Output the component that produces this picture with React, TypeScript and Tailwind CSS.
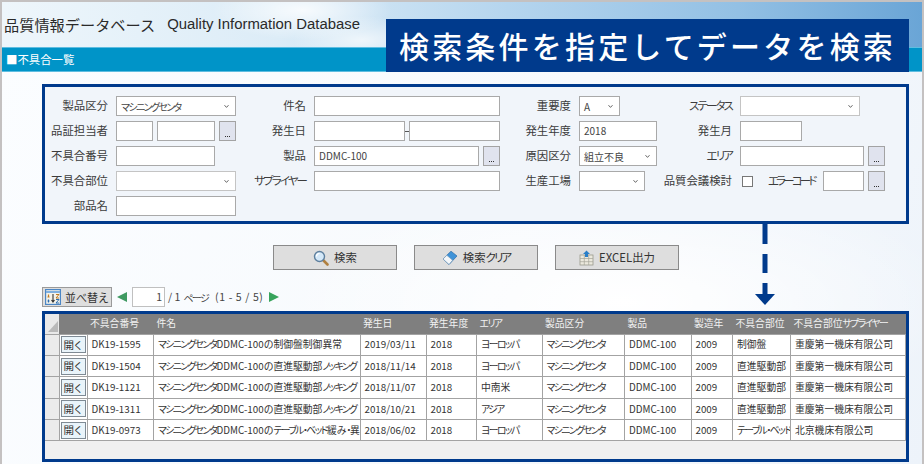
import React from 'react';

const FONT = "[font-family:'Noto_Sans_CJK_JP','Noto_Sans',sans-serif]";

// katakana in the original UI font is narrow, so squeeze only those runs
function Jp({ text, tight }: { text: string; tight?: boolean }) {
  const parts = text.split(/([ァ-ヶー・]+)/);
  return (
    <>
      {parts.map((p, i) =>
        i % 2 === 1 ? (
          <span key={i} className={`${tight ? 'tracking-[-0.24em]' : 'tracking-[-0.16em]'} [font-feature-settings:'palt']`}>{p}</span>
        ) : (
          <span key={i}>{p}</span>
        )
      )}
    </>
  );
}

function Label({ text }: { text: string }) {
  return (
    <div className="flex items-center justify-end whitespace-nowrap text-[11.4px] text-[#3c3c3c]">
      <Jp text={text} />
    </div>
  );
}

function Input({ w, value }: { w: string; value?: string }) {
  return (
    <div className={`${w} h-5 shrink-0 border border-[#a9a9a9] bg-white pl-1 text-[10px] leading-[18px] text-[#444]`}>
      {value}
    </div>
  );
}

function Select({ w, value, light }: { w: string; value?: string; light?: boolean }) {
  return (
    <div className={`${w} h-5 shrink-0 flex items-center justify-between border ${light ? 'border-[#c4c4c4]' : 'border-[#a9a9a9]'} bg-white pl-1 pr-[5px] text-[10px] text-[#444]`}>
      <span className="whitespace-nowrap"><Jp text={value || ''} /></span>
      <svg width="7" height="5" viewBox="0 0 7 5" className="shrink-0">
        <path d="M1.5 1.2 L3.5 3.4 L5.5 1.2" fill="none" stroke="#666" strokeWidth="1" />
      </svg>
    </div>
  );
}

function Dots() {
  return (
    <div className="w-[17px] h-5 shrink-0 flex items-end justify-center border border-[#a3a3a3] bg-[#e0e3ee] pb-[3px]">
      <span className="flex gap-px">
        <i className="block w-px h-px bg-[#333]" />
        <i className="block w-px h-px bg-[#333]" />
        <i className="block w-px h-px bg-[#333]" />
      </span>
    </div>
  );
}

function Action({ icon, label }: { icon: React.ReactNode; label: string }) {
  return (
    <div className="w-[124px] h-[25px] flex items-center justify-center gap-[5px] border border-[#8a8a8a] bg-[#dedede] text-[11.4px] text-[#333]">
      {icon}
      <span><Jp text={label} /></span>
    </div>
  );
}

const SearchIcon = (
  <svg width="16" height="16" viewBox="0 0 16 16">
    <path d="M9.5 9.5 L14.5 14.5" stroke="#b08040" strokeWidth="2.6" strokeLinecap="round" />
    <circle cx="6.5" cy="6.5" r="5" fill="#d4e8f8" stroke="#5d7f9e" strokeWidth="1.4" />
    <path d="M3.5 6.5 A3 3 0 0 1 6.5 3.5" fill="none" stroke="#fff" strokeWidth="1.2" />
  </svg>
);

const EraserIcon = (
  <svg width="16" height="16" viewBox="0 0 16 16">
    <path d="M1 9 L9 1.2 L15 6 L7 14.5 Z" fill="#3f93d8" stroke="#2b6ca8" strokeWidth=".7" />
    <path d="M1 9 L4.8 5.3 L10.6 10.2 L7 14.5 Z" fill="#f4f7fa" stroke="#7c9cb8" strokeWidth=".7" />
  </svg>
);

const ExcelIcon = (
  <svg width="15" height="16" viewBox="0 0 15 16">
    <rect x="1" y="5" width="13" height="10" fill="#ece9de" stroke="#9a9a8c" strokeWidth=".8" />
    <path d="M1 8.5 H14 M1 11.7 H14 M5.3 5 V15 M9.7 5 V15" stroke="#a5a598" strokeWidth=".7" />
    <path d="M7.5 0.5 L11 4 H9 V7 H6 V4 H4 Z" fill="#2a7fc8" />
  </svg>
);

const SortIcon = (
  <svg width="16" height="16" viewBox="0 0 16 16">
    <rect x=".6" y=".6" width="14.8" height="14.8" fill="#f5f3ea" stroke="#4b86c5" strokeWidth="1.2" />
    <path d="M1 3 H15" stroke="#7fb0e0" strokeWidth="2" />
    <path d="M3.5 5.5 V8.5 M2.5 8 H4.5" stroke="#c07a20" strokeWidth="1.2" />
    <path d="M3.5 10.5 V13.5 M2.5 12 H4.5" stroke="#2a6db0" strokeWidth="1.2" />
    <path d="M8 5 V13 M6.5 11 L8 13 L9.5 11" fill="none" stroke="#333" strokeWidth="1.1" />
    <path d="M11 5.5 H14 L11 9 H14" fill="none" stroke="#c07a20" strokeWidth="1" />
    <path d="M11 10.5 H14 L11 14 H14" fill="none" stroke="#2a6db0" strokeWidth="1" />
  </svg>
);

const ROWS = [
  ['DK19-1595', 'マシニングセンタDDMC-100の制御盤制御異常', '2019/03/11', '2018', 'ヨーロッパ', 'マシニングセンタ', 'DDMC-100', '2009', '制御盤', '重慶第一機床有限公司'],
  ['DK19-1504', 'マシニングセンタDDMC-100の直進駆動部ノッキング', '2018/11/14', '2018', 'ヨーロッパ', 'マシニングセンタ', 'DDMC-100', '2009', '直進駆動部', '重慶第一機床有限公司'],
  ['DK19-1121', 'マシニングセンタDDMC-100の直進駆動部ノッキング', '2018/11/07', '2018', '中南米', 'マシニングセンタ', 'DDMC-100', '2009', '直進駆動部', '重慶第一機床有限公司'],
  ['DK19-1311', 'マシニングセンタDDMC-100の直進駆動部ノッキング', '2018/10/21', '2018', 'アジア', 'マシニングセンタ', 'DDMC-100', '2009', '直進駆動部', '重慶第一機床有限公司'],
  ['DK19-0973', 'マシニングセンタDDMC-100のテーブル・ベッド緩み・異音', '2018/06/02', '2018', 'ヨーロッパ', 'マシニングセンタ', 'DDMC-100', '2009', 'テーブル・ベッド', '北京機床有限公司'],
];

const HEADERS = ['不具合番号', '件名', '発生日', '発生年度', 'エリア', '製品区分', '製品', '製造年', '不具合部位', '不具合部位サプライヤー'];
const WIDTHS = [14, 28, 66.5, 206.5, 66, 50.5, 65.5, 82.5, 66.5, 41.5, 58, 115.2];

export default function App() {
  return (
    <div className={`${FONT} relative w-[924px] h-[464px] overflow-hidden border-x-2 border-t-2 border-[#c4c1c1] bg-[radial-gradient(ellipse_340px_120px_at_620px_300px,#ffffff,transparent),linear-gradient(115deg,#fbfdff_0%,#f7fafd_55%,#edf3fa_100%)]`}>
      {/* Header */}
      <header className="h-[45px] flex items-center pl-[2px] bg-[radial-gradient(ellipse_90px_30px_at_300px_8px,#ffffffcc,transparent),radial-gradient(ellipse_70px_24px_at_360px_38px,#ffffffaa,transparent),linear-gradient(90deg,#eef6fb_0%,#dcecf7_30%,#b5d5ee_55%,#93c0e4_80%,#6aa5d6_100%)]">
        <span className="text-[15.2px] text-[#2a2a2a] whitespace-nowrap">品質情報データベース</span>
        <span className="ml-[12px] text-[14.9px] text-[#2a2a2a] whitespace-nowrap [font-family:'Liberation_Sans',sans-serif]">Quality Information Database</span>
      </header>
      <div className="h-[25px] flex items-center pl-1 bg-[#0094c8] border-y border-[#5fbde0] text-[11.4px] text-white">■不具合一覧</div>

      {/* Search panel */}
      <section className="mt-[12px] ml-[40px] w-[867px] h-[140px] border-[3px] border-[#003a8c] bg-[#f1f5fa] pt-[9px]">
        <div className="grid grid-cols-[63px_120px_62px_186px_63px_78px_67px_145px] grid-rows-[20px_20px_20px_20px_20px] gap-x-2 gap-y-[5px]">
          <Label text="製品区分" />
          <Select w="w-full" value="マシニングセンタ" />
          <Label text="件名" />
          <Input w="w-full" />
          <Label text="重要度" />
          <Select w="w-[41px]" value="A" />
          <Label text="ステータス" />
          <Select w="w-[120px]" light />

          <Label text="品証担当者" />
          <div className="flex gap-1">
            <Input w="w-[37px]" />
            <Input w="w-[58px]" />
            <Dots />
          </div>
          <Label text="発生日" />
          <div className="flex items-center gap-0">
            <Input w="w-[91px]" />
            <span className="w-1 h-px bg-[#555]" />
            <Input w="w-[91px]" />
          </div>
          <Label text="発生年度" />
          <Input w="w-full" value="2018" />
          <Label text="発生月" />
          <Input w="w-[62px]" />

          <Label text="不具合番号" />
          <Input w="w-[99px]" />
          <Label text="製品" />
          <div className="flex gap-1">
            <Input w="w-[165px]" value="DDMC-100" />
            <Dots />
          </div>
          <Label text="原因区分" />
          <Select w="w-full" value="組立不良" />
          <Label text="エリア" />
          <div className="flex gap-1">
            <Input w="w-[124px]" />
            <Dots />
          </div>

          <Label text="不具合部位" />
          <Select w="w-full" light />
          <Label text="サプライヤー" />
          <Input w="w-full" />
          <Label text="生産工場" />
          <Select w="w-[66px]" />
          <Label text="品質会議検討" />
          <div className="flex items-center">
            <div className="ml-[2px] w-[11px] h-[11px] border border-[#777] bg-white" />
            <span className="ml-[15px] w-[47px] whitespace-nowrap text-[11.4px] text-[#3c3c3c]"><Jp text="エラーコード" tight /></span>
            <div className="ml-2 flex gap-1">
              <Input w="w-[41px]" />
              <Dots />
            </div>
          </div>

          <Label text="部品名" />
          <Input w="w-full" />
        </div>
      </section>

      {/* Actions */}
      <div className="mt-[21px] ml-[271px] flex gap-[17px]">
        <Action icon={SearchIcon} label="検索" />
        <Action icon={EraserIcon} label="検索クリア" />
        <Action icon={ExcelIcon} label="EXCEL出力" />
      </div>

      {/* Pager */}
      <div className="mt-[17px] ml-[40px] h-5 flex items-center text-[10.5px] text-[#444]">
        <div className="w-[70px] h-5 flex items-center justify-center gap-[4px] border border-[#9a9a9a] bg-[#dedede] text-[11px] text-[#333]">
          {SortIcon}
          <span><Jp text="並べ替え" /></span>
        </div>
        <svg width="10" height="10" viewBox="0 0 10 10" className="ml-[5px]">
          <path d="M0 5 L10 0 V10 Z" fill="#3f9a62" />
        </svg>
        <div className="ml-[5px] w-[33px] h-5 border border-[#c0c0c0] bg-white pr-[2px] text-right leading-[18px]">1</div>
        <span className="ml-[3px] w-[91px] flex items-center whitespace-nowrap">
          <span>/ 1</span>
          <span className="ml-[3px] text-[10px]"><Jp text="ページ" /></span>
          <span className="ml-[7px] tracking-[0.6px]">(1 - 5 / 5)</span>
        </span>
        <svg width="10" height="10" viewBox="0 0 10 10" className="ml-[10px]">
          <path d="M0 0 L10 5 L0 10 Z" fill="#38a45c" />
        </svg>
      </div>

      {/* Result table */}
      <section className="mt-1 ml-[40px] w-[867px] h-[151px] border-[3px] border-[#003a8c] bg-[#f0f0f0] overflow-hidden">
        <table className="table-fixed border-collapse w-[861px] text-[9.8px] text-[#333]">
          <colgroup>
            {WIDTHS.map((w, i) => (
              <col key={i} style={{ width: w }} />
            ))}
          </colgroup>
          <thead>
            <tr className="h-5 bg-[#7f7f7f] text-[#f2f2f2]">
              <th className="relative bg-[#e9e9e9] p-0">
                <svg width="10" height="11" viewBox="0 0 10 11" className="absolute right-px bottom-[2px]">
                  <path d="M10 0 V11 H0 Z" fill="#b9b9b9" />
                </svg>
              </th>
              <th className="p-0" />
              {HEADERS.map((h) => (
                <th key={h} className="px-[3px] text-left font-normal whitespace-nowrap overflow-hidden">
                  <Jp text={h} />
                </th>
              ))}
            </tr>
          </thead>
          <tbody>
            {ROWS.map((row) => (
              <tr key={row[0]} className="h-[21.4px] bg-white">
                <td className="border border-[#a3a3a3] border-l-0 bg-[#ebebeb] p-0" />
                <td className="border border-[#a3a3a3] p-0 pl-[1px]">
                  <div className="w-[25px] h-[17px] flex items-center justify-center border border-[#7e8a94] bg-[#e9f4fa] text-[10.5px] tracking-[-1px] text-[#333]">開く</div>
                </td>
                {row.map((cell, i) => (
                  <td key={i} className="border border-[#a3a3a3] px-[4px] py-0 whitespace-nowrap overflow-hidden">
                    <Jp text={cell} />
                  </td>
                ))}
              </tr>
            ))}
          </tbody>
        </table>
      </section>

      {/* Callout banner laid over the header */}
      <div className="absolute left-[384px] top-[17px] w-[523px] h-[53px] flex items-center justify-center bg-[#003a8c] text-[30px] font-medium tracking-[3.2px] text-white whitespace-nowrap">
        検索条件を指定してデータを検索
      </div>

      {/* Dashed arrow from the panel down to the table */}
      <svg width="22" height="84" viewBox="0 0 22 84" className="absolute left-[752px] top-[222px]">
        <path d="M11 0 V20 M11 30 V49 M11 59 V71" stroke="#003a8c" strokeWidth="5" />
        <path d="M1 70 H21 L11 81 Z" fill="#003a8c" />
      </svg>
    </div>
  );
}
